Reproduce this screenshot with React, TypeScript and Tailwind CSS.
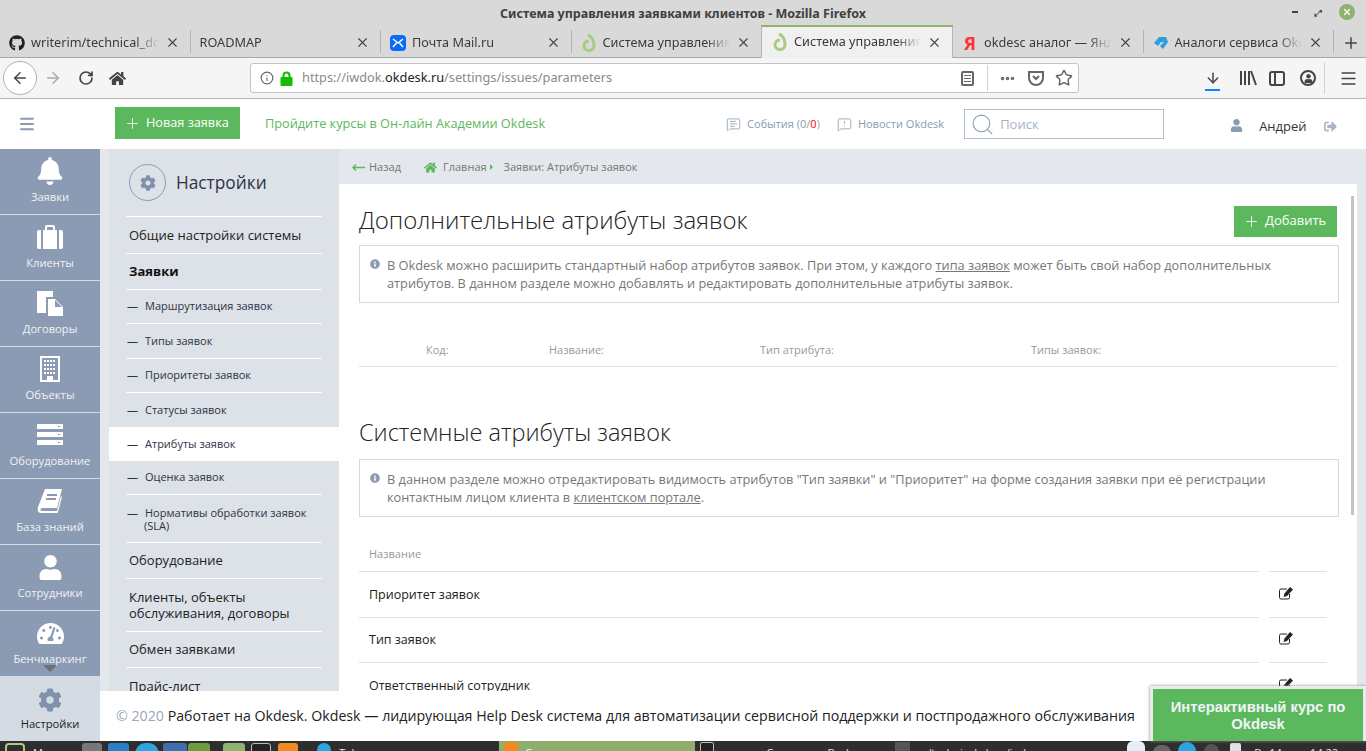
import { ReactNode } from "react";
import {
  FaBell,
  FaCog,
  FaGithub,
  FaHome,
  FaInfoCircle,
  FaSignOutAlt,
  FaTachometerAlt,
  FaUser,
} from "react-icons/fa";
import {
  ArrowDown,
  ArrowLeft,
  ArrowRight,
  Ellipsis,
  Info,
  Menu,
  MessageSquareText,
  MessageSquareWarning,
  Plus,
  RotateCw,
  Search,
  Star,
  X,
} from "lucide-react";

function OkdeskLogo() {
  return (
    <svg width="16" height="18" viewBox="0 0 16 18" className="shrink-0">
      <path d="M7 1c3 1 6 5 6 10a5 5 0 0 1-10 1c0-3 2-5 5-5" fill="none" stroke="#a8cc7f" strokeWidth="3" />
    </svg>
  );
}

function MailLogo() {
  return (
    <span className="flex h-4 w-4 shrink-0 items-center justify-center rounded-sm bg-[#0a6cf5]">
      <svg width="12" height="10" viewBox="0 0 12 10">
        <path d="M1 1l5 4 5-4M1 9l3.500-4M11 9L7.500 5" fill="none" stroke="#fff" strokeWidth="1.500" />
      </svg>
    </span>
  );
}

function AnalogLogo() {
  return (
    <svg width="16" height="16" viewBox="0 0 16 16" className="shrink-0">
      <path d="M1 8l5-6h7l2 5-5 7-3-3 4-4H8l-3 4z" fill="#2d9fe0" />
    </svg>
  );
}

function Tab({ icon, title, active }: { icon?: ReactNode; title: string; active?: boolean }) {
  return (
    <div
      className={
        active
          ? "relative z-10 -mt-[3px] flex h-[33px] w-[192px] shrink-0 items-center gap-[6px] border-x border-t-2 border-x-[#b5b5b5] border-t-[#8fb26e] bg-[#f0f0f0] pb-[1px] pl-[10px] pr-[10px]"
          : "flex h-[29px] w-[189.500px] shrink-0 items-center gap-[6px] pl-[9px] pr-[10px]"
      }
    >
      {icon}
      <span className="min-w-0 flex-1 overflow-hidden whitespace-nowrap text-[12.700px] text-[#3a3a3a] [mask-image:linear-gradient(to_left,transparent,black_24px)]">
        {title}
      </span>
      <X size={15} strokeWidth={1.800} className="shrink-0 text-[#444]" />
    </div>
  );
}

function Divider() {
  return <span className="mt-[2px] h-[23px] w-px shrink-0 bg-[#b3b3b3]" />;
}

function BrowserChrome() {
  return (
    <div className="shrink-0 font-['Noto_Sans',sans-serif]">
      <div className="relative flex h-[28px] items-center justify-center bg-[#d9d9d9] text-[12.500px] font-bold text-[#404040]">
        Система управления заявками клиентов - Mozilla Firefox
        <div className="absolute right-[11px] top-[4px] flex items-center gap-[17px]">
          <span className="h-[2px] w-[6px] bg-[#444]" />
          <span className="text-[9px] leading-none text-[#444]">⤢</span>
          <span className="flex h-[16px] w-[16px] items-center justify-center rounded-full bg-[#8fb26e]">
            <X size={10} strokeWidth={3} className="text-white" />
          </span>
        </div>
      </div>
      <div className="flex h-[30px] items-start border-b border-[#a8a8a8] bg-[#d9d9d9]">
        <Tab icon={<FaGithub size={16} className="shrink-0 text-[#222]" />} title="writerim/technical_docs" />
        <Divider />
        <Tab title="ROADMAP" />
        <Divider />
        <Tab icon={<MailLogo />} title="Почта Mail.ru" />
        <Divider />
        <Tab icon={<OkdeskLogo />} title="Система управления заявками" />
        <Tab active icon={<OkdeskLogo />} title="Система управления заявками" />
        <Tab icon={<span className="w-4 shrink-0 text-center text-[18px] font-bold leading-none text-[#f33]">Я</span>} title="okdesc аналог — Яндекс" />
        <Divider />
        <Tab icon={<AnalogLogo />} title="Аналоги сервиса Okdesk" />
        <Divider />
        <Plus size={18} className="ml-[8px] mt-[6px] shrink-0 text-[#444]" />
      </div>
      <div className="flex h-[41px] items-center border-b border-[#b5b5b5] bg-[#f5f5f5] pl-[3px]">
        <span className="flex h-[34px] w-[34px] shrink-0 items-center justify-center rounded-full border border-[#b0b0b0] bg-white">
          <ArrowLeft size={18} className="text-[#444]" />
        </span>
        <ArrowRight size={18} className="ml-[7px] shrink-0 text-[#a9a9a9]" />
        <RotateCw size={16} strokeWidth={2.500} className="ml-[16px] shrink-0 text-[#444]" />
        <FaHome size={17} className="ml-[15px] shrink-0 text-[#444]" />
        <div className="ml-[124px] flex h-[30px] w-[829px] shrink-0 items-center rounded-[3px] border border-[#c4c4c4] bg-white pl-[9px] pr-[5px] text-[12.750px] text-[#8a8a8a]">
          <Info size={14} className="text-[#666]" />
          <svg width="13" height="15" viewBox="0 0 13 15" className="ml-[6px]">
            <path d="M3.500 7V4.500a3 3 0 0 1 6 0V7" fill="none" stroke="#12bc00" strokeWidth="2" />
            <rect x="0.500" y="6" width="12" height="9" rx="1" fill="#12bc00" />
          </svg>
          <span className="ml-[9px]">
            https://iwdok.<span className="text-[#222]">okdesk.ru</span>/settings/issues/parameters
          </span>
          <span className="ml-auto flex h-[15px] w-[13px] flex-col justify-center gap-[2px] rounded-[2px] border-2 border-[#666] px-[1px]">
            <span className="h-px bg-[#666]" />
            <span className="h-px bg-[#666]" />
            <span className="h-px bg-[#666]" />
          </span>
          <span className="ml-[13px] h-[26px] w-px bg-[#d0d0d0]" />
          <Ellipsis size={17} strokeWidth={3} className="ml-[11px] text-[#666]" />
          <svg width="18" height="18" viewBox="0 0 18 18" className="ml-[11px]">
            <path d="M2 3h14v6a7 7 0 0 1-14 0z" fill="none" stroke="#666" strokeWidth="2" />
            <path d="M6 7l3 3 3-3" fill="none" stroke="#666" strokeWidth="2" />
          </svg>
          <Star size={18} strokeWidth={2} className="ml-[10px] text-[#666]" />
        </div>
        <div className="relative ml-[126px] flex h-[20px] w-[16px] shrink-0 items-center justify-center">
          <ArrowDown size={18} strokeWidth={2.200} className="text-[#444]" />
          <span className="absolute bottom-[-3px] left-0 h-[2px] w-[15px] bg-[#0a84ff]" />
        </div>
        <svg width="18" height="16" viewBox="0 0 18 16" className="ml-[18px] shrink-0">
          <path d="M2 1v14M6 1v14M10 1v14M12 1l5 14" stroke="#444" strokeWidth="2" fill="none" />
        </svg>
        <span className="ml-[12px] flex h-[15px] w-[16px] shrink-0 items-stretch rounded-[3px] border-2 border-[#444]">
          <span className="w-[5px] border-r-2 border-[#444]" />
        </span>
        <span className="ml-[15px] flex h-[16px] w-[16px] shrink-0 items-center justify-center rounded-full border-2 border-[#444]">
          <FaUser size={9} className="text-[#444]" />
        </span>
        <span className="ml-[8px] h-[32px] w-px shrink-0 bg-[#d0d0d0]" />
        <Menu size={19} className="ml-[14px] shrink-0 text-[#444]" />
      </div>
    </div>
  );
}

function AppHeader() {
  return (
    <div className="flex h-[50px] shrink-0 items-center bg-white">
      <Menu size={18} strokeWidth={2.500} className="ml-[18px] text-[#8a9bb3]" />
      <div className="mb-[2px] ml-[79px] flex h-[32px] w-[125px] items-center gap-[5px] bg-[#5cb85c] pl-[9px] text-[12.700px] text-white">
        <Plus size={17} strokeWidth={1.200} />
        Новая заявка
      </div>
      <span className="ml-[25px] text-[12.720px] text-[#5cb85c]">Пройдите курсы в Он-лайн Академии Okdesk</span>
      <div className="ml-[181px] flex items-center gap-[6px] text-[11px] text-[#8a9bb3]">
        <MessageSquareText size={15} strokeWidth={1.300} />
        <span>
          События (0/<span className="text-[#f00]">0</span>)
        </span>
      </div>
      <div className="ml-[17px] flex items-center gap-[6px] text-[11px] text-[#8a9bb3]">
        <MessageSquareWarning size={15} strokeWidth={1.300} />
        Новости Okdesk
      </div>
      <div className="ml-[20px] flex h-[30px] w-[200px] items-center gap-[5px] border border-[#b4c0cf] pl-[5px] text-[13px] text-[#a9b2bf]">
        <Search size={25} strokeWidth={1} className="text-[#8a9bb3]" />
        <span className="pt-[1px]">Поиск</span>
      </div>
      <FaUser size={13} className="ml-[66px] mt-[3px] text-[#8a9bb3]" />
      <span className="ml-[16px] mt-[6px] text-[13px] text-[#333]">Андрей</span>
      <FaSignOutAlt size={13} className="ml-[17px] mt-[4px] text-[#a9b5c6]" />
    </div>
  );
}

const navItems = [
  { label: "Заявки", icon: <FaBell size={28} /> },
  {
    label: "Клиенты",
    icon: (
      <svg width="26" height="24" viewBox="0 0 26 24" fill="currentColor">
        <path d="M8 5V2a2 2 0 0 1 2-2h6a2 2 0 0 1 2 2v3h-2V2h-6v3z" />
        <path d="M2 5h2v19H2a2 2 0 0 1-2-2V7a2 2 0 0 1 2-2zM6 5h14v19H6zM22 5h2a2 2 0 0 1 2 2v15a2 2 0 0 1-2 2h-2z" />
      </svg>
    ),
  },
  {
    label: "Договоры",
    icon: (
      <svg width="26" height="26" viewBox="0 0 26 26" fill="currentColor">
        <path d="M0 1h16v6H9v16H0z" />
        <path d="M11 9h7l8 8v9H11zm7 1v7h7z" />
      </svg>
    ),
  },
  {
    label: "Объекты",
    icon: (
      <svg width="20" height="26" viewBox="0 0 20 26" fill="currentColor">
        <path fillRule="evenodd" d="M0 0h20v26H0zM2 2v22h5v-4h6v4h5V2z" />
        <path d="M4 4h2v2H4zM7 4h2v2H7zM10 4h2v2h-2zM13 4h2v2h-2zM4 8h2v2H4zM7 8h2v2H7zM10 8h2v2h-2zM13 8h2v2h-2zM4 12h2v2H4zM7 12h2v2H7zM10 12h2v2h-2zM13 12h2v2h-2zM4 16h2v2H4zM7 16h2v2H7zM10 16h2v2h-2zM13 16h2v2h-2z" />
      </svg>
    ),
  },
  {
    label: "Оборудование",
    icon: (
      <svg width="26" height="22" viewBox="0 0 26 22" fill="currentColor">
        <path fillRule="evenodd" d="M0 0h26v5H0zM21 2v1h2V2zM0 8h26v5H0zM21 10v1h2v-1zM0 16h26v5H0zM21 18v1h2v-1z" />
      </svg>
    ),
  },
  {
    label: "База знаний",
    icon: (
      <svg width="26" height="24" viewBox="0 0 26 24" fill="currentColor">
        <path fillRule="evenodd" d="M8 0h17l-5 19H5c-2 0-2 3 0 3h15l4-15 1 1-4 15a1 1 0 0 1-1 1H4c-3 0-4-3-3-6zM10 5v2h10V5zM9 9v2h10V9z" />
      </svg>
    ),
  },
  { label: "Сотрудники", icon: <FaUser size={25} /> },
  { label: "Бенчмаркинг", icon: <FaTachometerAlt size={27} /> },
];

function IconSidebar() {
  return (
    <div className="flex w-[100px] shrink-0 flex-col bg-[#8b9bb3] text-white">
      {navItems.map((item, i) => (
        <div
          key={item.label}
          className={
            i === navItems.length - 1
              ? "relative flex h-[65px] flex-col items-center pt-[7px]"
              : "flex h-[66px] flex-col items-center border-b border-[#d5dbe3] pt-[7px]"
          }
        >
          <span className="flex h-[30px] items-center">{item.icon}</span>
          <span className="mt-[3px] text-[11.200px] text-[#f0f2f5]">{item.label}</span>
          {i === navItems.length - 1 && (
            <span className="absolute bottom-[4px] left-[43px] h-0 w-0 border-x-[7px] border-t-[7px] border-x-transparent border-t-[#6f6f78]" />
          )}
        </div>
      ))}
      <div className="flex flex-1 flex-col items-center bg-[#d5dbe3] pt-[12px]">
        <FaCog size={24} className="text-[#8091ab]" />
        <span className="mt-[4px] text-[11.200px] text-[#222]">Настройки</span>
      </div>
    </div>
  );
}

function MenuRow({ children, height, active, last }: { children: ReactNode; height: string; active?: boolean; last?: boolean }) {
  return (
    <div className={active ? `${height} -mx-[17px] bg-white px-[17px]` : height}>
      <div className={active || last ? "flex h-full items-center" : "flex h-full items-center border-b border-white"}>{children}</div>
    </div>
  );
}

function SubItem({ children }: { children: ReactNode }) {
  return (
    <span className="flex text-[11px] text-[#2d3345]">
      <span className="w-[19px] shrink-0 pl-[1px] text-[#2d3345]">—</span>
      {children}
    </span>
  );
}

function SettingsMenu() {
  return (
    <div className="ml-[9px] w-[230px] shrink-0 overflow-hidden bg-[#dde1e8] px-[17px]">
      <div className="flex h-[68px] items-center gap-[10px] border-b border-white pl-[3px]">
        <span className="flex h-[37px] w-[37px] items-center justify-center rounded-full border border-[#8b9bb3]">
          <FaCog size={16} className="text-[#8091ab]" />
        </span>
        <span className="text-[17.300px] text-[#2d3345]">Настройки</span>
      </div>
      <MenuRow height="h-[37px]">
        <span className="pl-[3px] pt-[1px] text-[13px] text-[#222]">Общие настройки системы</span>
      </MenuRow>
      <MenuRow height="h-[36px]">
        <span className="pl-[3px] text-[13px] font-bold text-[#111]">Заявки</span>
      </MenuRow>
      <MenuRow height="h-[34px]"><SubItem>Маршрутизация заявок</SubItem></MenuRow>
      <MenuRow height="h-[35px]"><SubItem>Типы заявок</SubItem></MenuRow>
      <MenuRow height="h-[34px]"><SubItem>Приоритеты заявок</SubItem></MenuRow>
      <MenuRow height="h-[34px]" last><SubItem>Статусы заявок</SubItem></MenuRow>
      <MenuRow height="h-[34px]" active><SubItem>Атрибуты заявок</SubItem></MenuRow>
      <MenuRow height="h-[34px]"><SubItem>Оценка заявок</SubItem></MenuRow>
      <MenuRow height="h-[48px]">
        <span className="pl-[18px] -indent-[18px] text-[11px] leading-[13px] text-[#2d3345]">
          <span className="inline-block w-[19px] indent-0 pl-[1px]">—</span>Нормативы обработки заявок (SLA)
        </span>
      </MenuRow>
      <MenuRow height="h-[36px]">
        <span className="pl-[3px] pt-[1px] text-[13px] text-[#222]">Оборудование</span>
      </MenuRow>
      <MenuRow height="h-[53px]">
        <span className="pl-[3px] text-[13px] leading-[16px] text-[#222]">Клиенты, объекты обслуживания, договоры</span>
      </MenuRow>
      <MenuRow height="h-[36px]">
        <span className="pl-[3px] text-[13px] text-[#222]">Обмен заявками</span>
      </MenuRow>
      <div className="pl-[3px] pt-[9px] text-[13px] text-[#222]">Прайс-лист</div>
    </div>
  );
}

function InfoBox({ children, height }: { children: ReactNode; height: string }) {
  return (
    <div className={`${height} mr-[16px] flex items-start gap-[7px] border border-[#d5d8e0] pl-[10px] pr-[20px] pt-[10px] text-[12.750px] leading-[18px] text-[#777]`}>
      <FaInfoCircle size={10} className="mt-[3px] shrink-0 text-[#8b9bb3]" />
      <p>{children}</p>
    </div>
  );
}

function EditIcon() {
  return (
    <svg width="14" height="13" viewBox="0 0 14 13" className="mb-[2px]">
      <path d="M8 2H2a1.500 1.500 0 0 0-1.500 1.500v7A1.500 1.500 0 0 0 2 12h7a1.500 1.500 0 0 0 1.500-1.500V7" fill="none" stroke="#222" />
      <path d="M11 0l3 2.500L8 9l-3.500 1L5.500 6.500z" fill="#222" />
    </svg>
  );
}

function AttrRow({ label }: { label: string }) {
  return (
    <div className="flex h-[45.500px] gap-[10px]">
      <div className="flex flex-1 items-center border-t border-[#dfe2e8] pl-[10px] pt-[2px] text-[12.500px] text-[#222]">{label}</div>
      <div className="flex w-[58px] items-center border-t border-[#dfe2e8] pl-[10px]">
        <EditIcon />
      </div>
    </div>
  );
}

function MainContent() {
  return (
    <div className="relative min-w-0 flex-1 overflow-hidden bg-white">
      <div className="flex h-[35px] items-center bg-[#e4e7ec] pl-[13px] pt-[1px] text-[11px] text-[#777]">
        <svg width="13" height="7" viewBox="0 0 13 7">
          <path d="M13 3.500H2M4 .5L1 3.500l3 3" fill="none" stroke="#5cb85c" strokeWidth="1.500" />
        </svg>
        <span className="ml-[4px]">Назад</span>
        <FaHome size={13} className="ml-[23px] text-[#5cb85c]" />
        <span className="ml-[6px]">Главная</span>
        <span className="ml-[3px] h-0 w-0 border-y-[3px] border-l-[3px] border-y-transparent border-l-[#5cb85c]" />
        <span className="ml-[11px]">Заявки: Атрибуты заявок</span>
      </div>
      <div className="flex">
        <div className="min-w-0 flex-1 pl-[20px] pr-[2px]">
          <div className="flex h-[61px] items-center justify-between pt-[11px]">
            <h1 className="font-['Open_Sans',sans-serif] text-[24px] font-light text-[#222]">Дополнительные атрибуты заявок</h1>
            <div className="mr-[18px] mt-[2px] flex h-[31px] w-[103px] items-center gap-[5px] bg-[#5cb85c] pl-[9px] text-[13px] text-white">
              <Plus size={17} strokeWidth={1.200} />
              Добавить
            </div>
          </div>
          <InfoBox height="h-[58px]">
            В Okdesk можно расширить стандартный набор атрибутов заявок. При этом, у каждого <u>типа заявок</u> может быть свой набор дополнительных атрибутов. В данном разделе можно добавлять и редактировать дополнительные атрибуты заявок.
          </InfoBox>
          <div className="mr-[18px] mt-[39px] grid h-[25px] grid-cols-[123px_211px_271px_1fr] items-start border-b border-[#dfe2e8] pl-[67px] text-[11px] text-[#999]">
            <span>Код:</span>
            <span>Название:</span>
            <span>Тип атрибута:</span>
            <span>Типы заявок:</span>
          </div>
          <h2 className="mt-[49px] font-['Open_Sans',sans-serif] text-[23.500px] font-light leading-[33px] text-[#222]">Системные атрибуты заявок</h2>
          <div className="mt-[10px]">
            <InfoBox height="h-[58px]">
              В данном разделе можно отредактировать видимость атрибутов "Тип заявки" и "Приоритет" на форме создания заявки при её регистрации контактным лицом клиента в <u>клиентском портале</u>.
            </InfoBox>
          </div>
          <div className="mt-[29px] h-[25px] pl-[10px] text-[11px] text-[#999]">Название</div>
          <div className="pr-[28px]">
            <AttrRow label="Приоритет заявок" />
            <AttrRow label="Тип заявок" />
            <AttrRow label="Ответственный сотрудник" />
          </div>
        </div>
        <div className="w-[9px] shrink-0 self-stretch bg-[#e4e7ec]" />
      </div>
      <div className="absolute left-[1012px] top-[47px] h-[319px] w-[3px] bg-[#c4c4c4]" />
    </div>
  );
}

function Footer() {
  return (
    <div className="flex h-[50px] shrink-0 items-center bg-white pl-[16px] text-[14.200px] text-[#222]">
      <span className="text-[#9aa7b9]">© 2020&nbsp;</span>
      Работает на Okdesk. Okdesk — лидирующая Help Desk система для автоматизации сервисной поддержки и постпродажного обслуживания
    </div>
  );
}

function TaskIcon({ className, ml, w }: { className: string; ml: string; w: string }) {
  return <span className={`${ml} ${w} ${className} mt-[2px] h-[22px] shrink-0 rounded-[3px]`} />;
}

function Taskbar() {
  return (
    <div className="flex h-[10px] shrink-0 items-start overflow-hidden bg-[#2e2e2e] text-[11px] text-[#e8e8e8]">
      <span className="ml-[5px] mt-[2px] h-[20px] w-[20px] shrink-0 rounded-[4px] border-2 border-[#a8cc7f]" />
      <span className="ml-[8px] mt-[6px] leading-[12px]">Меню</span>
      <TaskIcon ml="ml-[17px]" w="w-[20px]" className="bg-[#777]" />
      <TaskIcon ml="ml-[6px]" w="w-[21px]" className="bg-[#2b7fc4]" />
      <TaskIcon ml="ml-[6px]" w="w-[24px] !rounded-full" className="bg-[#2ca5e0]" />
      <TaskIcon ml="ml-[4px]" w="w-[24px]" className="bg-[#3f6fb0]" />
      <TaskIcon ml="ml-[1px]" w="w-[22px]" className="bg-[#6f9a3e]" />
      <TaskIcon ml="ml-[13px]" w="w-[22px]" className="bg-[#8fb26e]" />
      <TaskIcon ml="ml-[6px]" w="w-[20px]" className="border border-[#bbb] bg-[#222]" />
      <TaskIcon ml="ml-[7px]" w="w-[20px]" className="bg-[#f08a24]" />
      <TaskIcon ml="ml-[19px]" w="w-[14px] !rounded-full" className="bg-[#2ca5e0]" />
      <span className="ml-[8px] mt-[6px] w-[160px] leading-[12px]">Telegram</span>
      <div className="flex h-[10px] w-[196px] shrink-0 items-start bg-[#8fae6e]">
        <span className="ml-[5px] mt-[1px] h-[16px] w-[14px] rounded-[2px] bg-[#f08a24]" />
        <span className="ml-[7px] mt-[6px] leading-[12px] text-white">Система</span>
      </div>
      <span className="ml-[5px] mt-[1px] h-[16px] w-[14px] shrink-0 rounded-[2px] border border-[#bbb] bg-[#222]" />
      <span className="ml-[52px] mt-[6px] w-[129px] shrink-0 leading-[12px]">Система — Bash</span>
      <span className="mt-[1px] h-[16px] w-[15px] shrink-0 bg-[#555]" />
      <span className="ml-[17px] mt-[6px] w-[200px] shrink-0 leading-[12px]">/technical_docs/index</span>
      <span className="h-[18px] w-[18px] shrink-0 rounded-t-[6px] bg-[#e8eef5]" />
      <span className="ml-[8px] mt-[4px] h-[16px] w-[18px] shrink-0 rounded-full bg-[#666]" />
      <span className="ml-[7px] mt-[1px] h-[18px] w-[18px] shrink-0 rounded-full bg-[#2ca5e0]" />
      <span className="ml-[8px] mt-[3px] h-[15px] w-[15px] shrink-0 rounded-full bg-[#555]" />
      <span className="ml-[11px] mt-[2px] h-[15px] w-[11px] shrink-0 rounded-[2px] bg-[#dfe3e8]" />
      <span className="ml-[13px] mt-[6px] whitespace-nowrap leading-[12px]">Вт 14 апр, 14:22</span>
    </div>
  );
}

export default function App() {
  return (
    <div className="relative flex h-[751px] w-[1366px] flex-col overflow-hidden bg-white font-['Open_Sans',sans-serif]">
      <BrowserChrome />
      <AppHeader />
      <div className="flex min-h-0 flex-1 bg-[#e4e7ec]">
        <IconSidebar />
        <div className="flex min-w-0 flex-1 flex-col">
          <div className="flex min-h-0 flex-1">
            <SettingsMenu />
            <MainContent />
          </div>
          <Footer />
        </div>
      </div>
      <Taskbar />
      <div className="absolute bottom-[10px] right-0 flex h-[55px] w-[216px] items-center justify-center border-[3px] border-b-0 border-[#e8eaee] bg-[#5cb85c] px-[6px] pt-[2px] text-center font-['Liberation_Sans',sans-serif] text-[14.800px] font-bold leading-[17px] text-[#f0f4f8] shadow-[0_0_3px_#888]">
        Интерактивный курс по Okdesk
      </div>
    </div>
  );
}
